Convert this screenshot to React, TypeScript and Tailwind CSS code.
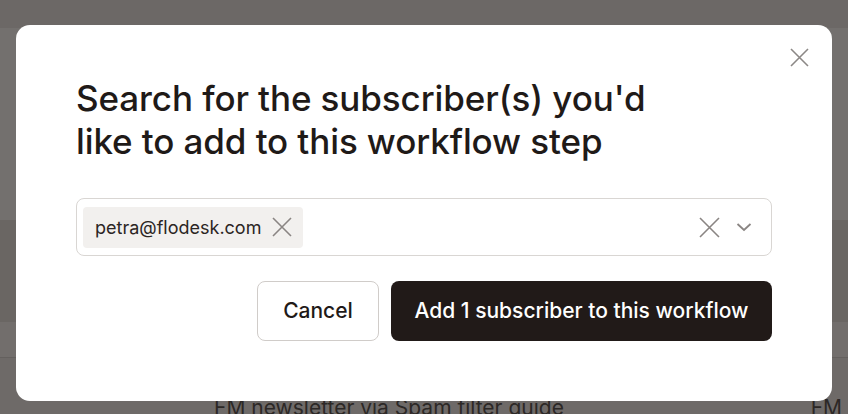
const font = { fontFamily: "Inter, 'Noto Sans', sans-serif" };

function Cross({ size, stroke = 1.5, className }: { size: number; stroke?: number; className?: string }) {
  return (
    <svg width={size} height={size} viewBox={`0 0 ${size} ${size}`} className={className} fill="none">
      <path d={`M1 1L${size - 1} ${size - 1}M${size - 1} 1L1 ${size - 1}`} stroke="currentColor" strokeWidth={stroke} />
    </svg>
  );
}

function Chevron() {
  return (
    <svg width="16" height="10" viewBox="0 0 16 10" fill="none">
      <path d="M1.5 2L8 8L14.5 2" stroke="currentColor" strokeWidth="1.8" />
    </svg>
  );
}

function Backdrop() {
  return (
    <div className="flex flex-col w-full h-full">
      <div className="h-[28px] bg-[#6c6866]" />
      <div className="h-[192px] bg-[#73706e]" />
      <div className="h-[102px] bg-[#6a6663]" />
      <div className="h-[36px] bg-[#726e6c] border-b border-[#64605e]" />
      <div className="flex-1 bg-[#6e6a68] flex items-end pb-[2px] text-[21px] text-[#2c2826]">
        <span className="ml-[214px] leading-none translate-y-[6px]">FM newsletter via Spam filter guide</span>
        <span className="ml-auto mr-[6px] leading-none translate-y-[6px]">FM</span>
      </div>
    </div>
  );
}

function Modal() {
  return (
    <div className="relative w-[816px] h-[376px] bg-white rounded-[14px] px-[60px] pt-[52px]">
      <button className="absolute left-[774px] top-[23px] text-[#8c8886]">
        <Cross size={19} stroke={1.6} />
      </button>
      <h2 className="text-[35px] leading-[43px] font-medium text-[#1f1a18] tracking-[-0.1px]">
        Search for the subscriber(s) you'd
        <br />
        like to add to this workflow step
      </h2>
      <div className="mt-[35px] h-[58px] border border-[#d9d6d3] rounded-[8px] flex items-center pl-[6px] pr-[19px]">
        <div className="h-[41px] bg-[#f2f0ee] rounded-[4px] flex items-center pl-[12px] pr-[11px] gap-[11px]">
          <span className="text-[18px] text-[#2b2523]">petra@flodesk.com</span>
          <Cross size={20} stroke={1.6} className="text-[#8a8583]" />
        </div>
        <div className="ml-auto flex items-center gap-[16px] text-[#8a8583]">
          <Cross size={21} stroke={1.6} />
          <Chevron />
        </div>
      </div>
      <div className="mt-[25px] flex justify-end gap-[12px]">
        <button className="h-[60px] w-[122px] border border-[#d0ccc9] rounded-[8px] text-[21px] font-medium text-[#1f1a18]">
          Cancel
        </button>
        <button className="h-[60px] w-[381px] bg-[#211a18] rounded-[8px] text-[21px] font-medium text-white">
          Add 1 subscriber to this workflow
        </button>
      </div>
    </div>
  );
}

export default function App() {
  return (
    <div className="relative w-[848px] h-[414px] overflow-hidden" style={font}>
      <Backdrop />
      <div className="absolute left-[16px] top-[25px]">
        <Modal />
      </div>
    </div>
  );
}
